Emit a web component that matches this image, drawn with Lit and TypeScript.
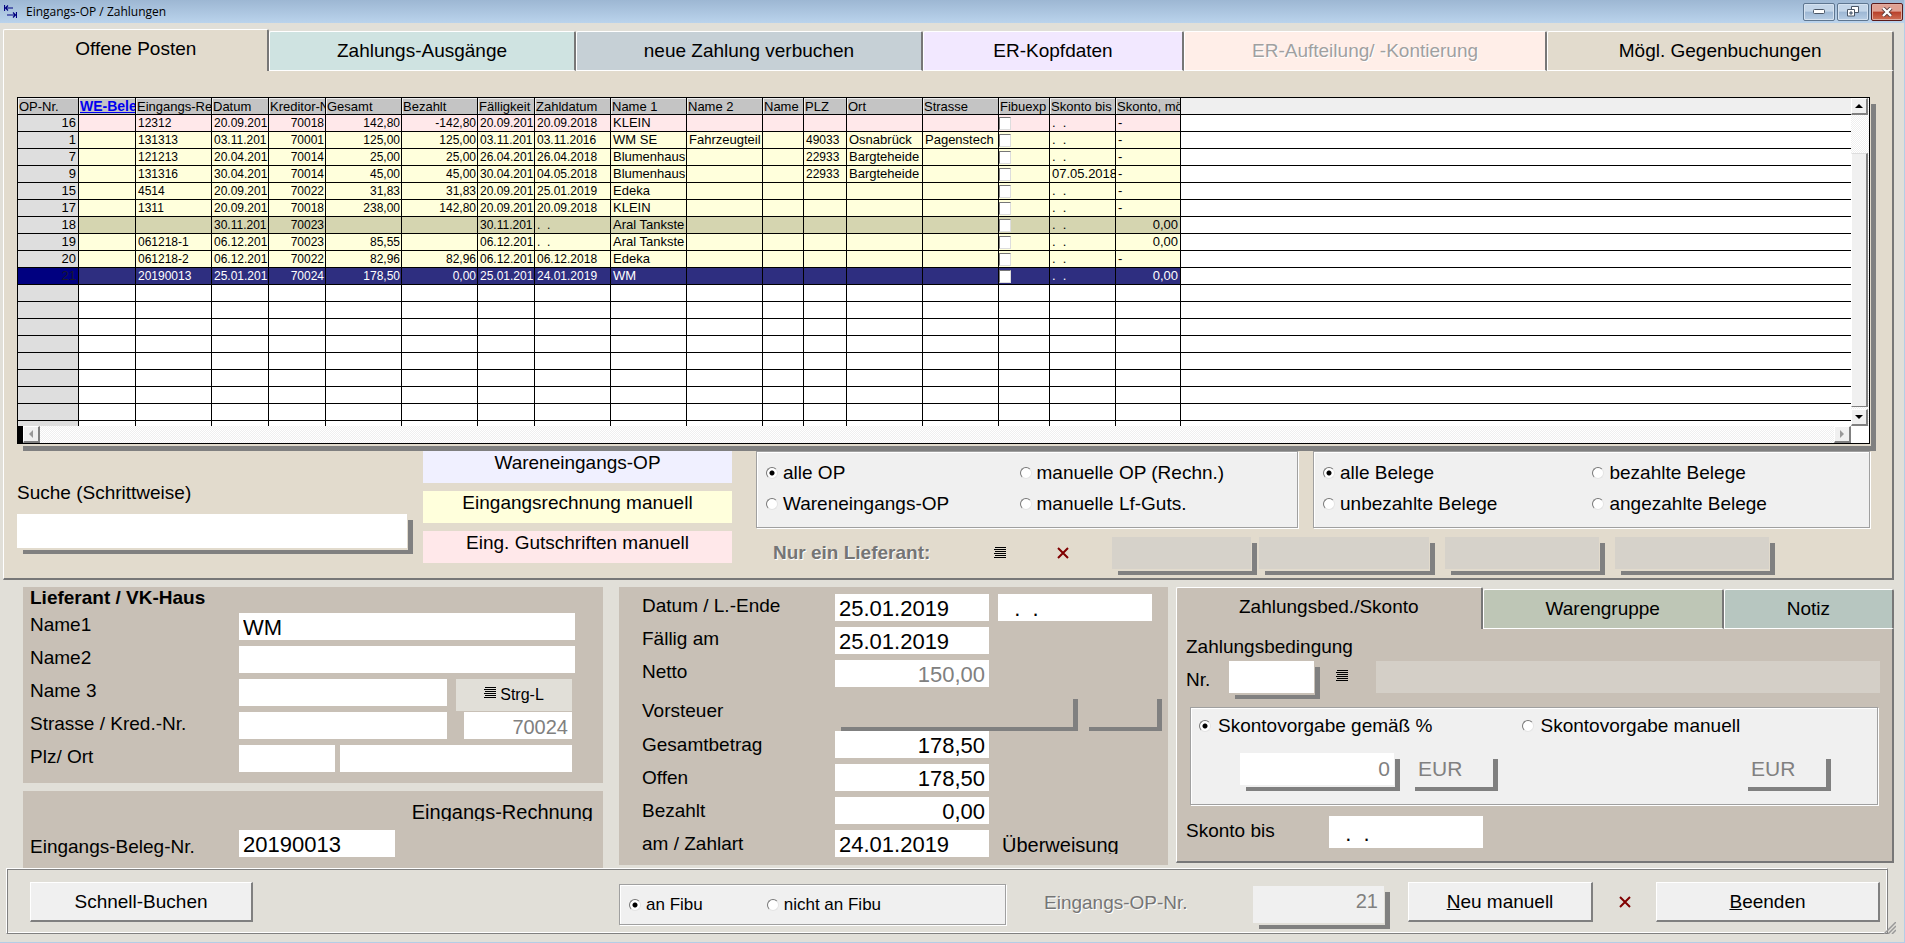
import { LitElement, html, css, svg, nothing } from "lit";
import { customElement, state } from "lit/decorators.js";
import { classMap } from "lit/directives/class-map.js";

interface Column {
  label: string;
  width: number;
  align?: "right";
  kind?: "check" | "link";
  /** Set in the smaller figure size. */
  figures?: boolean;
  /** Longest text the column shows. */
  chars?: number;
}

interface Posting {
  tone: "credit" | "manual" | "marked" | "selected";
  cells: string[];
}

interface Tab {
  label: string;
  weight: number;
  tone: string;
  disabled?: boolean;
}

const COLUMNS: Column[] = [
  { label: "OP-Nr.", width: 61, align: "right" },
  { label: "WE-Bele", width: 57, kind: "link" },
  { label: "Eingangs-Re", width: 76, figures: true },
  { label: "Datum", width: 57, figures: true, chars: 9 },
  { label: "Kreditor-N", width: 57, align: "right", figures: true },
  { label: "Gesamt", width: 76, align: "right", figures: true },
  { label: "Bezahlt", width: 76, align: "right", figures: true },
  { label: "Fälligkeit", width: 57, figures: true, chars: 9 },
  { label: "Zahldatum", width: 76, figures: true },
  { label: "Name 1", width: 76, chars: 12 },
  { label: "Name 2", width: 76, chars: 12 },
  { label: "Name", width: 41 },
  { label: "PLZ", width: 43, figures: true },
  { label: "Ort", width: 76 },
  { label: "Strasse", width: 76, chars: 10 },
  { label: "Fibuexp", width: 51, kind: "check" },
  { label: "Skonto bis", width: 66 },
  { label: "Skonto, mö", width: 65 },
];

const NO_DATE = ".  .";

const POSTINGS: Posting[] = [
  { tone: "credit", cells: ["16", "", "12312", "20.09.2018", "70018", "142,80", "-142,80", "20.09.2018", "20.09.2018", "KLEIN", "", "", "", "", "", "", NO_DATE, "-"] },
  { tone: "manual", cells: ["1", "", "131313", "03.11.2016", "70001", "125,00", "125,00", "03.11.2016", "03.11.2016", "WM SE", "Fahrzeugteile", "", "49033", "Osnabrück", "Pagenstecher", "", NO_DATE, "-"] },
  { tone: "manual", cells: ["7", "", "121213", "20.04.2018", "70014", "25,00", "25,00", "26.04.2018", "26.04.2018", "Blumenhaus", "", "", "22933", "Bargteheide", "", "", NO_DATE, "-"] },
  { tone: "manual", cells: ["9", "", "131316", "30.04.2018", "70014", "45,00", "45,00", "30.04.2018", "04.05.2018", "Blumenhaus", "", "", "22933", "Bargteheide", "", "", "07.05.2018", "-"] },
  { tone: "manual", cells: ["15", "", "4514", "20.09.2018", "70022", "31,83", "31,83", "20.09.2018", "25.01.2019", "Edeka", "", "", "", "", "", "", NO_DATE, "-"] },
  { tone: "manual", cells: ["17", "", "1311", "20.09.2018", "70018", "238,00", "142,80", "20.09.2018", "20.09.2018", "KLEIN", "", "", "", "", "", "", NO_DATE, "-"] },
  { tone: "marked", cells: ["18", "", "", "30.11.2018", "70023", "", "", "30.11.2018", NO_DATE, "Aral Tankstelle", "", "", "", "", "", "", NO_DATE, "0,00"] },
  { tone: "manual", cells: ["19", "", "061218-1", "06.12.2018", "70023", "85,55", "", "06.12.2018", NO_DATE, "Aral Tankstelle", "", "", "", "", "", "", NO_DATE, "0,00"] },
  { tone: "manual", cells: ["20", "", "061218-2", "06.12.2018", "70022", "82,96", "82,96", "06.12.2018", "06.12.2018", "Edeka", "", "", "", "", "", "", NO_DATE, "-"] },
  { tone: "selected", cells: ["21", "", "20190013", "25.01.2019", "70024", "178,50", "0,00", "25.01.2019", "24.01.2019", "WM", "", "", "", "", "", "", NO_DATE, "0,00"] },
];

const EMPTY_ROWS = 9;

const MAIN_TABS: Tab[] = [
  { label: "Offene Posten", weight: 266, tone: "sand" },
  { label: "Zahlungs-Ausgänge", weight: 306, tone: "mint" },
  { label: "neue Zahlung verbuchen", weight: 348, tone: "steel" },
  { label: "ER-Kopfdaten", weight: 260, tone: "lilac" },
  { label: "ER-Aufteilung/ -Kontierung", weight: 364, tone: "rose", disabled: true },
  { label: "Mögl. Gegenbuchungen", weight: 347, tone: "sand" },
];

const SUB_TABS: Tab[] = [
  { label: "Zahlungsbed./Skonto", weight: 307, tone: "stone" },
  { label: "Warengruppe", weight: 241, tone: "sage" },
  { label: "Notiz", weight: 169, tone: "teal" },
];

const listIcon = svg`<svg class="glyph" width="13" height="12" viewBox="0 0 13 12" shape-rendering="crispEdges" aria-hidden="true">
  <path d="M1 .5h11M0 2.5h12M1 4.5h11M0 6.5h12M1 8.5h11M0 10.5h12" stroke="#000" fill="none"/></svg>`;

const crossIcon = svg`<svg class="glyph" width="12" height="12" viewBox="0 0 12 12" aria-hidden="true">
  <path d="M1 1l10 10M11 1L1 11" stroke="#800000" stroke-width="2" fill="none"/></svg>`;

@customElement("app-root")
export class AppRoot extends LitElement {
  @state() private mainTab = 0;
  @state() private subTab = 0;

  static styles = css`
    :host {
      --window: #e1dfd8;
      --sand: #e2dbcd;
      --stone: #c8c0b6;
      --face: #f0f0f0;
      --shade: #808080;
      display: flex;
      flex-direction: column;
      box-sizing: border-box;
      min-height: 100vh;
      background: var(--window);
      border: solid #b5cde6;
      border-width: 0 1px 1px 0;
      font: 19px/22px "Liberation Sans", Arial, sans-serif;
      color: #000;
    }
    *, *::before { box-sizing: border-box; }
    button, input { font: inherit; color: inherit; margin: 0; border-radius: 0; }
    button { padding: 0; border: 0; background: none; }
    label { white-space: nowrap; }

    .titlebar {
      display: flex;
      align-items: center;
      height: 23px;
      padding: 0 1px 0 4px;
      background: linear-gradient(#9db7d3, #bad3ec);
      font: 12px/18px "Open Sans", "Noto Sans", sans-serif;
    }
    .titlebar h1 { flex: 1; margin: 0 0 0 9px; font: inherit; }
    .winbtns { display: flex; gap: 2px; }
    .winbtn {
      display: grid;
      place-items: center;
      width: 32px;
      height: 18px;
      border: 1px solid #5e7690;
      border-radius: 2px;
      background: linear-gradient(#c3d5e8 45%, #9db7d4 50%, #b7cde4);
      box-shadow: inset 0 0 0 1px #d5e2f0;
    }
    .winbtn.close {
      border-color: #5a1a1a;
      background: linear-gradient(#e0a193 45%, #b8402a 50%, #cf6f55);
      box-shadow: inset 0 0 0 1px #e0ab9f;
    }

    .tabs { display: flex; align-items: flex-end; height: 42px; }
    .tab {
      min-width: 0;
      height: 40px;
      border: solid #fff;
      border-width: 1px 2px 1px 1px;
      border-right-color: #777;
      border-radius: 2px 2px 0 0;
      white-space: nowrap;
      overflow: hidden;
    }
    .tab.active { height: 42px; padding-bottom: 4px; border-bottom: 0; }
    .tab:disabled { color: #a0a0a0; text-shadow: 1px 1px #fff; }
    .tab.sand { background: var(--sand); }
    .tab.mint { background: #cfe3e1; }
    .tab.steel { background: #c6d0d6; }
    .tab.lilac { background: #f2e8ff; }
    .tab.rose { background: #ffeee8; }
    .tab.stone { background: var(--stone); }
    .tab.sage { background: #bec6b6; }
    .tab.teal { background: #b7c6c0; }
    .page {
      border: solid #fff;
      border-width: 0 2px 2px 1px;
      border-right-color: #777;
      border-bottom-color: #777;
    }

    .postings { margin: 6px 10px 0 3px; }
    .postings .page { --bg: var(--sand); background: var(--sand); padding: 26px 22px 0 13px; }

    .sheet {
      display: grid;
      grid-template-columns: minmax(0, 1fr) 18px;
      border: 1px solid #000;
      background: #fff;
      box-shadow: 1px 2px 0 var(--sand), 6px 7px 0 var(--shade);
    }
    .viewport { height: 328px; overflow: hidden; }
    table {
      width: 100%;
      table-layout: fixed;
      border-collapse: separate;
      border-spacing: 0;
      font-size: 13px;
      line-height: 16px;
    }
    th, td {
      height: 17px;
      padding: 0 2px;
      border: solid #000;
      border-width: 0 1px 1px 0;
      font-weight: 400;
      text-align: left;
      white-space: pre;
      overflow: hidden;
    }
    th { background: #c4c4c4; padding: 1px 0 0 1px; line-height: 15px; box-shadow: inset 1px 1px #eee; }
    th.link { font-size: 14px; font-weight: 700; color: #0000f0; text-decoration: underline; }
    th.fill { background: #efefef; box-shadow: none; }
    td.num { text-align: right; }
    td.figures { font-size: 12px; padding-right: 1px; }
    td.id { background: #dedede; }
    td.check { padding: 0; }
    .fill { border-right: 0; }
    .credit td { background: #ffe8ea; }
    .manual td { background: #ffffdc; }
    .marked td { background: #d5d5b0; }
    .selected td { background: #2e2e80; color: #fff; }
    .blank td, tr td.fill { background: #fff; }
    tr td.id { background: #dedede; }
    .selected td.id { background: #000080; color: #181830; }
    .tick {
      display: block;
      appearance: none;
      width: 12px;
      height: 13px;
      margin-top: 1px;
      background: #fff;
      border: 1px solid;
      border-color: #777 #ddd #ddd #777;
    }
    .vbar { display: flex; flex-direction: column; gap: 2px; }
    .vbar, .hbar { background: repeating-conic-gradient(#fff 0 25%, #efefef 0 50%) 0 0 / 2px 2px; }
    .hbar { display: flex; justify-content: space-between; height: 17px; border-left: 5px solid #000; }
    .scroll {
      display: grid;
      place-items: center;
      width: 17px;
      height: 17px;
      background: var(--face);
      border: solid;
      border-color: #fff var(--shade) var(--shade) #fff;
      border-width: 1px 2px 2px 1px;
    }
    .thumb {
      flex: 1;
      width: 17px;
      margin-top: 36px;
      background: var(--face);
      border: solid;
      border-color: #ddd var(--shade) var(--shade) #fff;
      border-width: 1px 2px 1px 1px;
    }

    .filters {
      display: grid;
      grid-template-columns: 406fr 309fr 1138fr;
      height: 127px;
      margin-top: 7px;
    }
    .search { display: flex; flex-direction: column; padding: 31px 16px 0 0; gap: 10px; }
    .search input { height: 34px; }
    .legend { display: flex; flex-direction: column; gap: 8px; text-align: center; }
    .legend span { height: 32px; padding-top: 1px; }
    .legend .goods { background: #f0f0ff; }
    .legend .invoice { background: #ffffdc; }
    .legend .voucher { background: #ffe8ea; }
    .scope { padding-left: 24px; }
    .groups { display: grid; grid-template-columns: 542fr 557fr; gap: 15px; }
    .group {
      background: var(--face);
      border: 1px solid #a0a0a0;
      box-shadow: 1px 1px #fff, inset 1px 1px #fff;
    }
    .options {
      display: grid;
      grid-template-columns: 269fr 276fr;
      align-content: start;
      gap: 9px 0;
      height: 77px;
      padding: 10px 0 0 9px;
    }
    .options.op { grid-template-columns: 254fr 278fr; }
    .radio { display: flex; align-items: center; gap: 5px; }
    .radio input {
      appearance: none;
      flex: none;
      width: 12px;
      height: 12px;
      border: 1px solid;
      border-color: #777 #e4e4e4 #e4e4e4 #777;
      border-radius: 50%;
      background: #fff;
    }
    .radio input:checked { background: radial-gradient(#000 0 2px, #fff 3px); }

    .supplier { display: flex; align-items: center; margin-top: 9px; padding-left: 17px; }
    .supplier strong { width: 221px; color: #757575; text-shadow: 1px 1px #fff; white-space: nowrap; }
    .supplier .remove { margin: 0 43px 0 50px; }
    .supplier .field { flex: 0 1 154px; min-width: 0; height: 32px; margin-right: 16px; background: #d6d2ca; }
    .supplier .field.first { flex-basis: 139px; margin-right: 8px; }
    .supplier .field.second { flex-basis: 170px; }
    .icon { display: grid; place-items: center; }
    .glyph { display: block; }

    .field {
      display: block;
      height: 27px;
      padding: 3px 4px 0;
      border: 0;
      background: #fff;
      font-size: 22px;
      min-width: 0;
    }
    .field.num { text-align: right; }
    .field:disabled { color: var(--shade); -webkit-text-fill-color: var(--shade); opacity: 1; }
    .field.raised { box-shadow: 1px 2px 0 var(--bg), 6px 6px 0 var(--shade); }
    .field.clear { background: var(--bg); }
    .field.small { font-size: 20px; }

    .details {
      display: grid;
      grid-template-columns: minmax(0, 580fr) minmax(0, 573fr) minmax(0, 718fr);
      align-items: start;
      padding: 7px 10px 0 23px;
    }
    .card { --bg: var(--stone); background: var(--stone); }
    .middle { height: 278px; margin: 0 8px 0 16px; padding: 7px 6px 0 23px; }
    .vendor { height: 196px; padding: 0 28px 0 7px; }
    .vendor h2 { margin: 0 0 4px; font-size: 19px; line-height: 22px; }
    .rows { display: grid; grid-template-columns: minmax(0, 1fr); gap: 6px; }
    .row { display: flex; height: 27px; }
    .row > label, .row > .caption { flex: none; line-height: 23px; }
    .vendor .row > label, .receipt .row > label { width: 209px; }
    .middle .row > label, .middle .row > .caption { width: 193px; }
    .wide { flex: 1; }
    .short { padding-right: 3px; }
    .lookup {
      display: flex;
      align-items: center;
      justify-content: center;
      gap: 3px;
      width: 116px;
      height: 32px;
      margin-left: 9px;
      background: var(--window);
      font-size: 16px;
    }
    .lookup .glyph { margin-bottom: 4px; }
    .account { width: 108px; margin-left: 17px; }
    .zip { width: 96px; margin-right: 5px; }
    .receipt { height: 77px; margin-top: 8px; padding: 9px 10px 0 7px; }
    .receipt .kind {
      height: 21px;
      margin: 0 0 9px;
      font-size: 20px;
      line-height: 25px;
      text-align: right;
      overflow: hidden;
    }
    .receipt .field { width: 156px; }
    .receipt .row > label { line-height: 34px; }
    .amount { width: 154px; }
    .until { width: 154px; margin-left: 9px; }
    .row.tax { height: 32px; }
    .tax > .caption { line-height: 36px; }
    .tax .field { height: 32px; }
    .tax .rate { width: 237px; }
    .tax .code { width: 73px; margin-left: 11px; }
    .sum > label { line-height: 27px; }
    .method { height: 24px; margin-left: 13px; font-size: 20px; line-height: 30px; overflow: hidden; }

    .right .page { --bg: var(--stone); height: 234px; background: var(--stone); padding: 7px 12px 0 9px; }
    .terms { display: flex; height: 32px; margin-top: 3px; }
    .terms > label { width: 43px; line-height: 38px; }
    .terms .field { height: 32px; }
    .terms .key { width: 85px; }
    .terms .icon { width: 62px; margin-bottom: 2px; padding-right: 6px; }
    .terms .text { flex: 1; background: #d4cfc7; }
    .discount { --bg: var(--face); height: 98px; margin: 14px 2px 0 4px; }
    .discount .modes { display: grid; grid-template-columns: 323fr 356fr; padding: 7px 0 0 8px; }
    .discount .modes .radio { gap: 7px; }
    .discount .values { display: flex; padding: 16px 52px 0 49px; }
    .discount .field { height: 32px; padding-top: 0; font-size: 21px; }
    .discount .percent { width: 154px; margin-right: 15px; }
    .discount .currency { width: 83px; padding-left: 9px; }
    .discount .last { margin-left: auto; }
    .deadline { display: flex; margin-top: 11px; }
    .deadline label { width: 143px; line-height: 30px; }
    .deadline .field { width: 154px; height: 32px; }

    .footer {
      display: grid;
      grid-template-columns: 612fr 1268fr;
      height: 66px;
      margin: 0 16px 0 6px;
      border: 1px solid;
      border-color: #fff var(--shade) var(--shade) #fff;
      box-shadow: inset 1px 1px var(--shade), inset -1px -1px #fff;
      position: relative;
    }
    .left-actions { padding: 13px 0 0 23px; }
    .push {
      height: 40px;
      background: var(--face);
      border: solid;
      border-color: #fff var(--shade) var(--shade) #fff;
      border-width: 1px 2px 2px 1px;
    }
    .push.quick { width: 223px; }
    .push.new { width: 185px; margin-left: 24px; }
    .push.end { width: 224px; }
    .right-actions { display: flex; align-items: flex-start; padding: 13px 7px 0 0; }
    .right-actions .group {
      display: flex;
      align-items: center;
      gap: 64px;
      flex: 0 1 387px;
      height: 41px;
      margin: 2px auto 0 0;
      padding-left: 9px;
      font-size: 17px;
    }
    .number { --bg: var(--window); display: flex; margin-top: 4px; }
    .number label { width: 209px; line-height: 34px; color: #757575; text-shadow: 1px 1px #fff; }
    .number .field { width: 131px; height: 37px; padding: 0 6px 6px; background: var(--face); font-size: 20px; }
    .footer .icon { width: 63px; height: 40px; }
    .grip { position: absolute; right: -9px; bottom: -1px; }
  `;

  private renderTabs(tabs: Tab[], current: number, pick: (i: number) => void, name: string) {
    return html`<div class="tabs" role="tablist" aria-label=${name}>
      ${tabs.map(
        (tab, i) => html`<button
          role="tab"
          class=${classMap({ tab: true, active: i === current, [tab.tone]: true })}
          style="flex:${tab.weight} 1 0px"
          aria-selected=${i === current ? "true" : "false"}
          ?disabled=${tab.disabled ?? false}
          @click=${() => pick(i)}
        >${tab.label}</button>`
      )}
    </div>`;
  }

  private renderRadio(group: string, label: string, checked = false) {
    return html`<label class="radio"><input type="radio" name=${group} .checked=${checked} />${label}</label>`;
  }

  private renderCell(text: string, i: number) {
    const col = COLUMNS[i];
    if (col.kind === "check") {
      return html`<td class="check"><input class="tick" type="checkbox" aria-label="Fibuexport" /></td>`;
    }
    const right = col.align === "right" || (i === COLUMNS.length - 1 && text !== "-");
    const shown = col.chars ? text.slice(0, col.chars) : text;
    return html`<td class=${classMap({ num: right, id: i === 0, figures: !!col.figures })}>${shown}</td>`;
  }

  private renderSheet() {
    return html`<div class="sheet">
      <div class="viewport">
        <table>
          <colgroup>
            ${COLUMNS.map((c) => html`<col style="width:${c.width}px" />`)}
            <col />
          </colgroup>
          <thead>
            <tr>
              ${COLUMNS.map((c) => html`<th scope="col" class=${c.kind === "link" ? "link" : nothing}>${c.label}</th>`)}
              <th class="fill"></th>
            </tr>
          </thead>
          <tbody>
            ${POSTINGS.map(
              (p) => html`<tr class=${p.tone}>${p.cells.map((t, i) => this.renderCell(t, i))}<td class="fill"></td></tr>`
            )}
            ${Array.from({ length: EMPTY_ROWS }, () => html`<tr class="blank">
              ${COLUMNS.map((_, i) => html`<td class=${i === 0 ? "id" : nothing}></td>`)}<td class="fill"></td>
            </tr>`)}
          </tbody>
        </table>
      </div>
      <div class="vbar">
        <button class="scroll" aria-label="Nach oben"><svg class="glyph" width="8" height="4" viewBox="0 0 8 4"><path d="M0 4L4 0l4 4z"/></svg></button>
        <div class="thumb"></div>
        <button class="scroll" aria-label="Nach unten"><svg class="glyph" width="8" height="4" viewBox="0 0 8 4"><path d="M0 0h8L4 4z"/></svg></button>
      </div>
      <div class="hbar">
        <button class="scroll" aria-label="Nach links"><svg class="glyph" width="4" height="8" viewBox="0 0 4 8"><path d="M4 0v8L0 4z" fill="#999"/></svg></button>
        <button class="scroll" aria-label="Nach rechts"><svg class="glyph" width="4" height="8" viewBox="0 0 4 8"><path d="M0 0v8l4-4z" fill="#999"/></svg></button>
      </div>
      <div></div>
    </div>`;
  }

  private renderFilters() {
    return html`<div class="filters">
      <div class="search">
        <label for="search">Suche (Schrittweise)</label>
        <input id="search" class="field raised" type="text" />
      </div>
      <div class="legend">
        <span class="goods">Wareneingangs-OP</span>
        <span class="invoice">Eingangsrechnung manuell</span>
        <span class="voucher">Eing. Gutschriften manuell</span>
      </div>
      <div class="scope">
        <div class="groups">
          <div class="group options op" role="radiogroup" aria-label="OP-Art">
            ${this.renderRadio("op", "alle OP", true)} ${this.renderRadio("op", "manuelle OP (Rechn.)")}
            ${this.renderRadio("op", "Wareneingangs-OP")} ${this.renderRadio("op", "manuelle Lf-Guts.")}
          </div>
          <div class="group options" role="radiogroup" aria-label="Belege">
            ${this.renderRadio("belege", "alle Belege", true)} ${this.renderRadio("belege", "bezahlte Belege")}
            ${this.renderRadio("belege", "unbezahlte Belege")} ${this.renderRadio("belege", "angezahlte Belege")}
          </div>
        </div>
        <div class="supplier">
          <strong>Nur ein Lieferant:</strong>
          <button class="icon" aria-label="Lieferant wählen">${listIcon}</button>
          <button class="icon remove" aria-label="Filter entfernen">${crossIcon}</button>
          <input class="field raised first" aria-label="Lieferant Nr." disabled />
          <input class="field raised second" aria-label="Lieferant Name 1" disabled />
          <input class="field raised" aria-label="Lieferant Name 2" disabled />
          <input class="field raised" aria-label="Lieferant Ort" disabled />
        </div>
      </div>
    </div>`;
  }

  private renderVendor() {
    return html`<div class="left">
      <section class="card vendor">
        <h2>Lieferant / VK-Haus</h2>
        <div class="rows">
          <div class="row"><label for="name1">Name1</label><input id="name1" class="field wide" value="WM" /></div>
          <div class="row"><label for="name2">Name2</label><input id="name2" class="field wide" /></div>
          <div class="row short">
            <label for="name3">Name 3</label><input id="name3" class="field wide" />
            <button class="lookup">${listIcon}Strg-L</button>
          </div>
          <div class="row short">
            <label for="street">Strasse / Kred.-Nr.</label><input id="street" class="field wide" />
            <input class="field num small account" aria-label="Kreditor-Nr." value="70024" disabled />
          </div>
          <div class="row short">
            <label for="zip">Plz/ Ort</label><input id="zip" class="field zip" />
            <input class="field wide" aria-label="Ort" />
          </div>
        </div>
      </section>
      <section class="card receipt">
        <p class="kind">Eingangs-Rechnung</p>
        <div class="row">
          <label for="receipt">Eingangs-Beleg-Nr.</label><input id="receipt" class="field" value="20190013" />
        </div>
      </section>
    </div>`;
  }

  private renderAmounts() {
    return html`<section class="card middle">
      <div class="rows">
        <div class="row">
          <label for="date">Datum / L.-Ende</label><input id="date" class="field amount" value="25.01.2019" />
          <input class="field until" aria-label="Leistungsende" value="  .  ." />
        </div>
        <div class="row"><label for="due">Fällig am</label><input id="due" class="field amount" value="25.01.2019" /></div>
        <div class="row"><label for="net">Netto</label><input id="net" class="field num amount" value="150,00" disabled /></div>
        <div class="row tax">
          <span class="caption">Vorsteuer</span>
          <input class="field raised clear rate" aria-label="Vorsteuer" disabled />
          <input class="field raised clear code" aria-label="Steuerschlüssel" disabled />
        </div>
        <div class="row sum"><label for="total">Gesamtbetrag</label><input id="total" class="field num amount" value="178,50" /></div>
        <div class="row sum"><label for="open">Offen</label><input id="open" class="field num amount" value="178,50" /></div>
        <div class="row sum"><label for="paid">Bezahlt</label><input id="paid" class="field num amount" value="0,00" /></div>
        <div class="row sum">
          <label for="paidon">am / Zahlart</label><input id="paidon" class="field amount" value="24.01.2019" />
          <span class="method">Überweisung</span>
        </div>
      </div>
    </section>`;
  }

  private renderTerms() {
    return html`<section class="right">
      ${this.renderTabs(SUB_TABS, this.subTab, (i) => (this.subTab = i), "Zusatzdaten")}
      <div class="page">
        <div>Zahlungsbedingung</div>
        <div class="terms">
          <label for="terms">Nr.</label><input id="terms" class="field raised key" />
          <button class="icon" aria-label="Zahlungsbedingung wählen">${listIcon}</button>
          <input class="field text" aria-label="Text der Zahlungsbedingung" disabled />
        </div>
        <div class="group discount">
          <div class="modes" role="radiogroup" aria-label="Skontovorgabe">
            ${this.renderRadio("skonto", "Skontovorgabe gemäß %", true)}
            ${this.renderRadio("skonto", "Skontovorgabe manuell")}
          </div>
          <div class="values">
            <input class="field raised num percent" aria-label="Skonto" value="0" disabled />
            <input class="field raised clear currency" aria-label="Währung" value="EUR" disabled />
            <input class="field raised clear currency last" aria-label="Währung manuell" value="EUR" disabled />
          </div>
        </div>
        <div class="deadline">
          <label for="deadline">Skonto bis</label><input id="deadline" class="field" value="  .  ." />
        </div>
      </div>
    </section>`;
  }

  private renderFooter() {
    return html`<footer class="footer">
      <div class="left-actions"><button class="push quick">Schnell-Buchen</button></div>
      <div class="right-actions">
        <div class="group" role="radiogroup" aria-label="Fibu">
          ${this.renderRadio("fibu", "an Fibu", true)} ${this.renderRadio("fibu", "nicht an Fibu")}
        </div>
        <div class="number">
          <label for="opnr">Eingangs-OP-Nr.</label><input id="opnr" class="field raised num" value="21" disabled />
        </div>
        <button class="push new"><u>N</u>eu manuell</button>
        <button class="icon" aria-label="Löschen">${crossIcon}</button>
        <button class="push end"><u>B</u>eenden</button>
      </div>
      <svg class="grip" width="12" height="12" viewBox="0 0 12 12" aria-hidden="true">
        <path d="M0 12L12 0M4 12l8-8M8 12l4-4" stroke="#999" stroke-width="1.5"/>
      </svg>
    </footer>`;
  }

  render() {
    return html`
      <header class="titlebar">
        <svg class="glyph" width="13" height="13" viewBox="0 0 13 13" aria-hidden="true">
          <path d="M.5 0v6M1 3h8M4 .5L1.5 3 4 5.500M12.500 7v6M3 10h9M9 7.500l2.500 2.500L9 12.500" stroke="#000080" stroke-width="1.200" fill="none"/>
        </svg>
        <h1>Eingangs-OP / Zahlungen</h1>
        <div class="winbtns">
          <button class="winbtn" aria-label="Minimieren">
            <svg width="12" height="6" viewBox="0 0 12 6"><rect x=".5" y=".5" width="11" height="4" rx="1" fill="#fff" stroke="#4a5666"/></svg>
          </button>
          <button class="winbtn" aria-label="Wiederherstellen">
            <svg width="12" height="11" viewBox="0 0 12 11">
              <g stroke="#4a5666"><path d="M4.500.5h7v6h-7z" fill="#fff"/><path d="M.5 3.500h7v6.500h-7z" fill="#fff"/><path d="M3 6h2v2H3z" fill="#9db7d4"/></g>
            </svg>
          </button>
          <button class="winbtn close" aria-label="Schließen">
            <svg width="12" height="10" viewBox="0 0 12 10">
              <path d="M2 1l8 8M10 1L2 9" stroke="#5a3a3a" stroke-width="4"/><path d="M2 1l8 8M10 1L2 9" stroke="#fff" stroke-width="2.400"/>
            </svg>
          </button>
        </div>
      </header>
      <main>
        <section class="postings">
          ${this.renderTabs(MAIN_TABS, this.mainTab, (i) => (this.mainTab = i), "Eingangs-OP")}
          <div class="page">${this.renderSheet()} ${this.renderFilters()}</div>
        </section>
        <div class="details">${this.renderVendor()} ${this.renderAmounts()} ${this.renderTerms()}</div>
      </main>
      ${this.renderFooter()}
    `;
  }
}
